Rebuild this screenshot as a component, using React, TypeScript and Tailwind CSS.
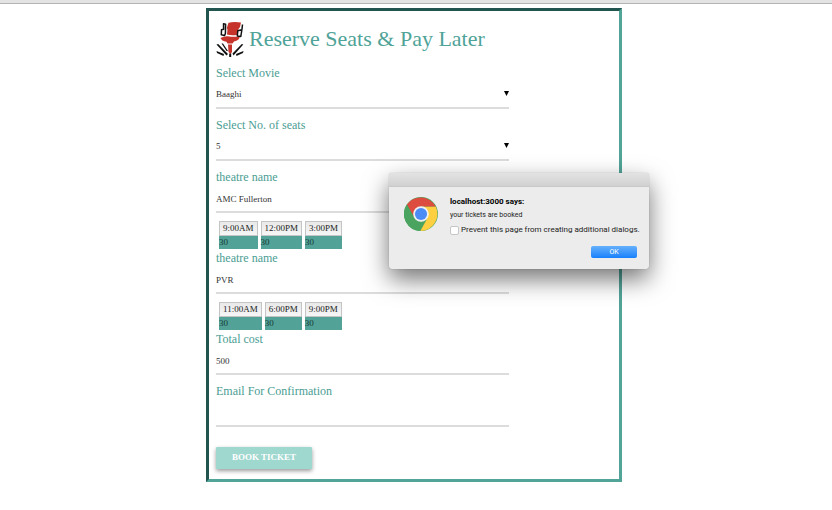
import { useId, useState } from "react";
import type { ReactNode } from "react";

type Show = { time: string; seats: number };

const line = "block h-[27px] w-full rounded-none border-0 border-b-2 border-[#dcdcdc] bg-transparent p-0 text-[9px] text-[#333] outline-none";

function Field({ label, children }: { label: string; children: (id: string) => ReactNode }) {
  const id = useId();
  return (
    <div className="mb-[7px] w-[74%]">
      <label htmlFor={id} className="block text-[12px] leading-[18px] text-[#4a9d93]">
        {label}
      </label>
      {children(id)}
    </div>
  );
}

function TextField({ label, value, type = "text" }: { label: string; value: string; type?: string }) {
  return (
    <Field label={label}>{(id) => <input id={id} type={type} defaultValue={value} className={line} />}</Field>
  );
}

function SelectField({ label, options }: { label: string; options: string[] }) {
  return (
    <Field label={label}>
      {(id) => (
        <div className="relative">
          <select id={id} className={`${line} appearance-none`}>
            {options.map((o) => (
              <option key={o}>{o}</option>
            ))}
          </select>
          <svg viewBox="0 0 5 5" className="pointer-events-none absolute top-[9px] right-0 h-[5px] w-[5px]" aria-hidden="true">
            <path d="M0 0H5L2.5 5Z" fill="#000" />
          </svg>
        </div>
      )}
    </Field>
  );
}

function Showtimes({ shows }: { shows: Show[] }) {
  return (
    <table className="mt-2 border-separate border-spacing-x-[3px] border-spacing-y-0 text-[9px] text-[#222]">
      <thead>
        <tr>
          {shows.map((s) => (
            <th key={s.time} className="p-0 font-normal">
              <button
                type="button"
                className="block h-[15px] w-full border border-[#c4c4c4] bg-linear-to-b from-[#e9e9e9] to-[#f6f6f6] px-[3px] leading-[13px]"
              >
                {s.time}
              </button>
            </th>
          ))}
        </tr>
      </thead>
      <tbody>
        <tr>
          {shows.map((s) => (
            <td key={s.time} className="h-[13px] bg-[#52a297] p-0 leading-[13px] text-[#173a36]">
              {s.seats}
            </td>
          ))}
        </tr>
      </tbody>
    </table>
  );
}

function ChairLogo() {
  return (
    <svg viewBox="0 0 28 36" className="h-[36px] w-[28px] shrink-0" aria-hidden="true">
      <path d="M12.5 1.8Q18 0.2 25 1.5L24 6L22.5 8L21.5 13.8Q16 15 11 13.5L11.5 8.5L10.8 7Z" fill="#c5332a" />
      <path d="M4.5 17Q8 14.800 12 15.200Q18 16.500 23.800 15.200Q23.500 19.500 18 20.500L16.500 22.500H11.500L10.500 20.800Q5.500 20 4.500 17Z" fill="#c5332a" />
      <path d="M12 23.500H16V31L14.500 33L12.500 31Z" fill="#c5332a" />
      <path d="M7.500 2.800L9.600 3.200L9.400 12.500L8.600 14.500L5.300 13.800L5.500 8.800L7.600 8.300Z" stroke="#111" strokeWidth="1.500" strokeLinejoin="round" fill="none" />
      <path d="M26.500 3.500L26 8L24.800 15.500L21.300 15L21.800 9.800L25.800 8.800" stroke="#111" strokeWidth="1.500" strokeLinejoin="round" fill="none" />
      <path d="M0.500 23.500L2.200 23L12 33L10.500 34.500ZM0.500 30L8 33L7.500 35L1 32ZM5.500 22.500L7 22.500L12 30L10.500 30ZM27.300 23.500L25.800 23L16.500 32.500L17.500 34.500ZM27.500 30L20 33L20.500 35L27 32ZM13.200 32.500H15.200V36H13.200Z" fill="#111" />
    </svg>
  );
}

function ChromeLogo() {
  return (
    <svg viewBox="0 0 48 48" className="h-[34px] w-[34px] shrink-0" aria-hidden="true">
      <circle cx="24" cy="24" r="24" fill="#4aa35f" />
      <path d="M24 24L23 48A24 24 0 0 0 44.800 13.500H24Z" fill="#fdcf41" />
      <path d="M24 13.500H44.800A24 24 0 0 0 4 10.700L14.500 29Z" fill="#dc4c3f" />
      <path d="M4 10.700L14.500 29.500L24 35L33 30L23 48A24 24 0 0 1 4 10.700Z" fill="#4aa35f" />
      <circle cx="24" cy="24" r="11" fill="#f1f1f1" />
      <circle cx="24" cy="24" r="8.600" fill="#4b8bf5" />
    </svg>
  );
}

function Alert({ onClose }: { onClose: () => void }) {
  return (
    <div
      role="alertdialog"
      aria-labelledby="alert-title"
      aria-describedby="alert-text"
      className="absolute top-[173px] left-[389px] w-[260px] rounded-[3px] bg-[#ececec] font-[Roboto,sans-serif] text-[8px] text-[#222] shadow-[0_10px_24px_rgba(0,0,0,0.55),0_0_1px_rgba(0,0,0,0.4)]"
    >
      <div className="h-[14px] rounded-t-[3px] border-b border-[#c8c8c8] bg-linear-to-b from-[#e4e3e4] to-[#d2d1d2]" />
      <div className="flex gap-3 pt-[10px] pr-3 pb-[11px] pl-[15px]">
        <ChromeLogo />
        <div className="flex min-w-0 flex-1 flex-col whitespace-nowrap">
          <h2 id="alert-title" className="text-[8px] leading-[10px] font-bold text-black">
            localhost:3000 says:
          </h2>
          <p id="alert-text" className="mt-[2px] text-[7px] leading-[12px]">
            your tickets are booked
          </p>
          <label className="mt-1 flex items-center gap-[2px] leading-[10px]">
            <input
              type="checkbox"
              className="size-[9px] shrink-0 appearance-none rounded-[2px] border border-[#c6c6c6] bg-white checked:bg-[#3b8ff5]"
            />
            Prevent this page from creating additional dialogs.
          </label>
          <button
            type="button"
            onClick={onClose}
            className="mt-[11px] h-[12px] w-[46px] self-end rounded-[2px] bg-linear-to-b from-[#64b0fb] to-[#1180fc] text-[7px] leading-[12px] text-white"
          >
            OK
          </button>
        </div>
      </div>
    </div>
  );
}

export default function App() {
  const [open, setOpen] = useState(true);
  return (
    <div className="relative min-h-screen bg-white font-['Liberation_Serif',serif]">
      <div className="h-1 border-b border-[#b4b4b4] bg-[#e3e3e3]" />
      <main className="pt-1 pr-1">
        <form
          onSubmit={(e) => {
            e.preventDefault();
            setOpen(true);
          }}
          className="mx-auto w-[calc(50%+2px)] border-[3px] border-t-[#225550] border-r-[#52a398] border-b-[#52a398] border-l-[#225550] px-[7px] pt-[10px] pb-[10px]"
        >
          <header className="mb-[7px] flex h-[36px] items-center gap-[5px]">
            <ChairLogo />
            <h1 className="text-[22px] leading-[36px] whitespace-nowrap text-[#4fa398]">Reserve Seats &amp; Pay Later</h1>
          </header>
          <SelectField label="Select Movie" options={["Baaghi"]} />
          <SelectField label="Select No. of seats" options={["5", "4", "3", "2", "1"]} />
          <TextField label="theatre name" value="AMC Fullerton" />
          <Showtimes
            shows={[
              { time: "9:00AM", seats: 30 },
              { time: "12:00PM", seats: 30 },
              { time: "3:00PM", seats: 30 },
            ]}
          />
          <TextField label="theatre name" value="PVR" />
          <Showtimes
            shows={[
              { time: "11:00AM", seats: 30 },
              { time: "6:00PM", seats: 30 },
              { time: "9:00PM", seats: 30 },
            ]}
          />
          <TextField label="Total cost" value="500" />
          <TextField label="Email For Confirmation" value="" type="email" />
          <button
            type="submit"
            className="mt-5 block h-[22px] w-[96px] rounded-[1px] bg-[#9fd8cf] text-[9px] font-bold text-white uppercase shadow-[0_2px_4px_rgba(0,0,0,0.4)]"
          >
            Book Ticket
          </button>
        </form>
      </main>
      {open && <Alert onClose={() => setOpen(false)} />}
    </div>
  );
}
